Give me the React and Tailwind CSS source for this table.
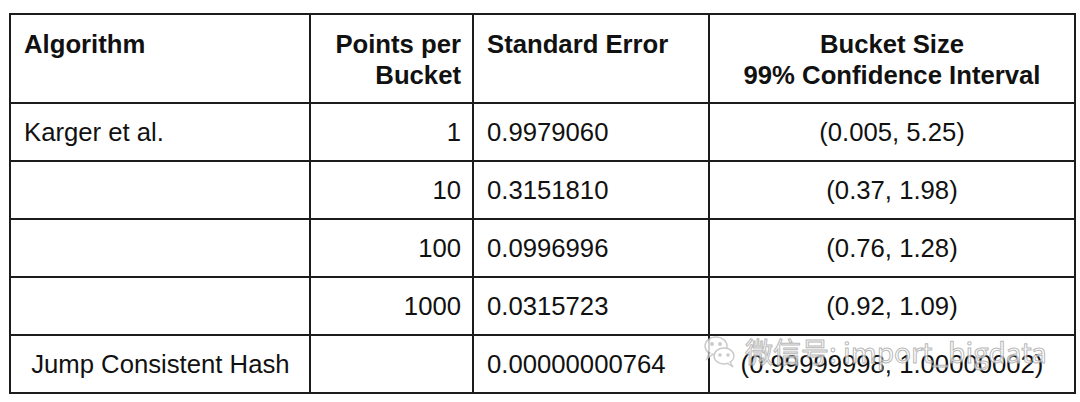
import React from 'react'

const rows = [
  { algo: 'Karger et al.', points: '1', err: '0.9979060', ci: '(0.005, 5.25)' },
  { algo: '', points: '10', err: '0.3151810', ci: '(0.37, 1.98)' },
  { algo: '', points: '100', err: '0.0996996', ci: '(0.76, 1.28)' },
  { algo: '', points: '1000', err: '0.0315723', ci: '(0.92, 1.09)' },
  { algo: '\u00a0Jump Consistent Hash', points: '', err: '0.00000000764', ci: '(0.99999998, 1.00000002)' },
]

function WeChatMark() {
  return (
    <svg width="34" height="36" viewBox="0 0 34 36" fill="none" stroke="#bdbdbd" strokeWidth="1.4">
      <ellipse cx="13" cy="13" rx="11" ry="9" fill="white" />
      <path d="M6 20 L4 26 L10 21" fill="white" />
      <ellipse cx="21" cy="23" rx="10" ry="8" fill="white" />
      <path d="M27 29 L30 34 L24 30" fill="white" />
      <circle cx="9" cy="11" r="1.2" fill="#bdbdbd" />
      <circle cx="17" cy="11" r="1.2" fill="#bdbdbd" />
      <circle cx="17" cy="22" r="1.1" fill="#bdbdbd" />
      <circle cx="25" cy="22" r="1.1" fill="#bdbdbd" />
    </svg>
  )
}

export default function App() {
  return (
    <div className="w-[1080px] h-[402px] bg-white pt-[13px] pl-[9px] font-['Liberation_Sans',Arial,sans-serif] text-[25.7px] text-[#111]">
      <div className="relative w-[1065px]">
        <table className="border-collapse table-fixed w-[1065px]">
          <colgroup>
            <col className="w-[300px]" />
            <col className="w-[163px]" />
            <col className="w-[236px]" />
            <col className="w-[366px]" />
          </colgroup>
          <thead>
            <tr className="h-[89px]">
              <th className="border-2 border-[#1c1c1c] align-top text-left font-bold leading-[31px] pt-[14px] pl-[13px]">Algorithm</th>
              <th className="border-2 border-[#1c1c1c] align-top text-right font-bold leading-[31px] pt-[14px] pr-[11px]">Points per<br />Bucket</th>
              <th className="border-2 border-[#1c1c1c] align-top text-left font-bold leading-[31px] pt-[14px] pl-[13px]">Standard Error</th>
              <th className="border-2 border-[#1c1c1c] align-top text-center font-bold leading-[31px] pt-[14px]">Bucket Size<br />99% Confidence Interval</th>
            </tr>
          </thead>
          <tbody>
            {rows.map((r, i) => (
              <tr key={i} className="h-[58px]">
                <td className="border-2 border-[#1c1c1c] pl-[13px] whitespace-pre">{r.algo}</td>
                <td className="border-2 border-[#1c1c1c] text-right pr-[11px]">{r.points}</td>
                <td className="border-2 border-[#1c1c1c] pl-[13px]">{r.err}</td>
                <td className="border-2 border-[#1c1c1c] text-center">{r.ci}</td>
              </tr>
            ))}
          </tbody>
        </table>

        {/* watermark */}
        <div className="absolute left-[694px] top-[320px] flex items-center gap-[8px] pointer-events-none opacity-80">
          <WeChatMark />
          <span className="text-[28px] leading-none text-white [-webkit-text-stroke:1px_#a8a8a8] font-['Noto_Sans_CJK_SC','Liberation_Sans',sans-serif]">微信号: import_bigdata</span>
        </div>
      </div>
    </div>
  )
}
